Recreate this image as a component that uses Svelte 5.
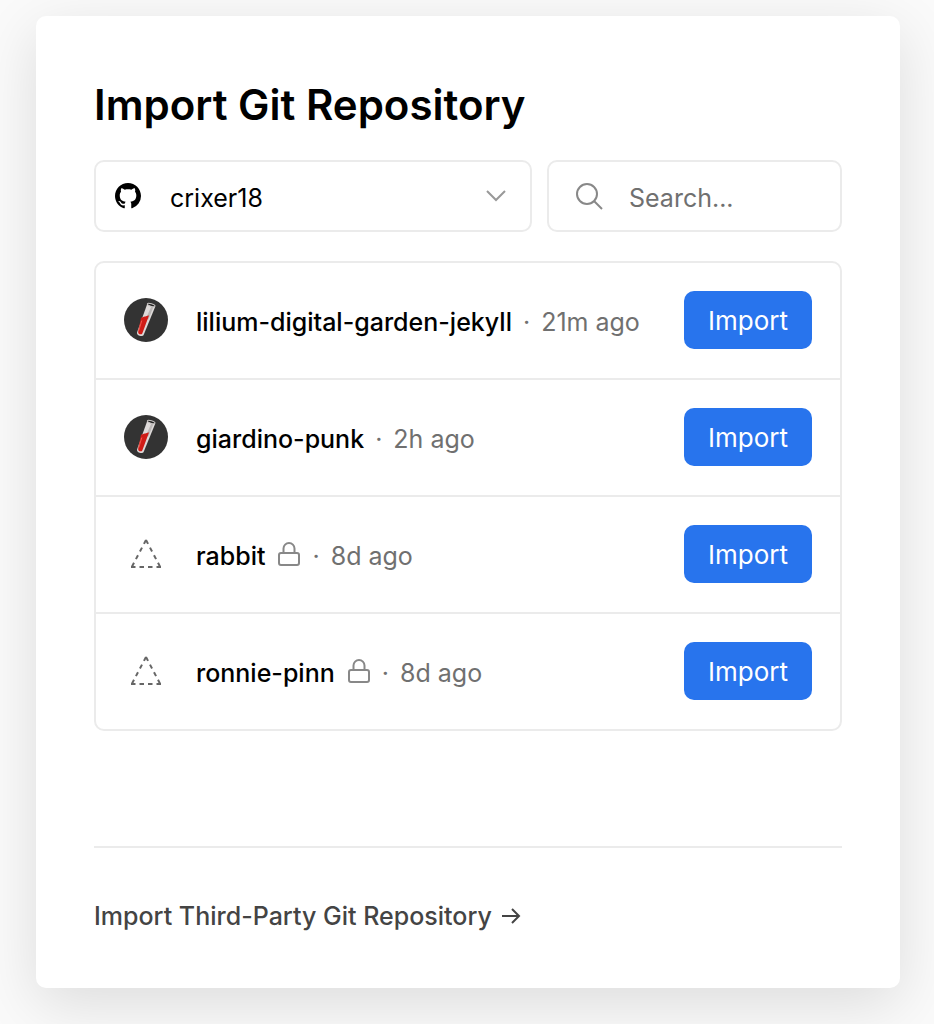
<script lang="ts">
  type Repo = {
    name: string
    updated: string
    framework: 'jekyll' | null
    locked: boolean
  }

  const accounts = ['crixer18']

  const repos: Repo[] = [
    { name: 'lilium-digital-garden-jekyll', updated: '21m ago', framework: 'jekyll', locked: false },
    { name: 'giardino-punk', updated: '2h ago', framework: 'jekyll', locked: false },
    { name: 'rabbit', updated: '8d ago', framework: null, locked: true },
    { name: 'ronnie-pinn', updated: '8d ago', framework: null, locked: true },
  ]

  let account = $state(accounts[0])
  let search = $state('')

  let filtered = $derived(repos.filter((repo) => repo.name.includes(search.trim().toLowerCase())))
</script>

<main class="card">
  <h1>Import Git Repository</h1>

  <div class="filters">
    <label class="field account">
      <svg class="github" viewBox="0 0 16 16" aria-hidden="true">
        <path
          d="M8 0C3.58 0 0 3.58 0 8c0 3.54 2.29 6.53 5.47 7.59.4.07.55-.17.55-.38 0-.19-.01-.82-.01-1.49-2.01.37-2.53-.49-2.69-.94-.09-.23-.48-.94-.82-1.13-.28-.15-.68-.52-.01-.53.63-.01 1.08.58 1.23.82.72 1.21 1.87.87 2.33.66.07-.52.28-.87.51-1.07-1.78-.2-3.64-.89-3.64-3.95 0-.87.31-1.59.82-2.15-.08-.2-.36-1.02.08-2.12 0 0 .67-.21 2.2.82.64-.18 1.32-.27 2-.27s1.36.09 2 .27c1.53-1.04 2.2-.82 2.2-.82.44 1.1.16 1.92.08 2.12.51.56.82 1.27.82 2.15 0 3.07-1.87 3.75-3.65 3.95.29.25.54.73.54 1.48 0 1.07-.01 1.93-.01 2.2 0 .21.15.46.55.38A8.01 8.01 0 0 0 16 8c0-4.42-3.58-8-8-8z"
        />
      </svg>
      <select bind:value={account} aria-label="Git account">
        {#each accounts as name}
          <option value={name}>{name}</option>
        {/each}
      </select>
      <svg class="chevron" viewBox="0 0 20 12" aria-hidden="true">
        <path d="M1 1l9 9 9-9" />
      </svg>
    </label>

    <label class="field search">
      <svg class="glass" viewBox="0 0 28 28" aria-hidden="true">
        <circle cx="12" cy="12" r="10" />
        <path d="M19 19l8 8" />
      </svg>
      <input type="text" placeholder="Search..." bind:value={search} aria-label="Search" />
    </label>
  </div>

  <ul class="repos">
    {#each filtered as repo (repo.name)}
      <li>
        <span class="framework">
          {#if repo.framework === 'jekyll'}
            <svg class="jekyll" viewBox="0 0 44 44" aria-hidden="true">
              <circle cx="22" cy="22" r="22" fill="#333" />
              <path d="M23.2 6l8 2.7-11.5 28c-1.2 2.9-7.6.9-6.6-2.4z" fill="#dedad9" />
              <path d="M27.4 8.2l2 .8-5 12.5-2.6-.8z" fill="#bbb7b6" />
              <path
                d="M17 19.5c1.6.4 2.4-1.3 4-1.1 1.6.1 2.2-1.2 4-.9l-6.6 17.7c-.9 2.2-4.8 1-4.2-1.5z"
                fill="#d01c17"
              />
              <path d="M17.8 22.5l-3 10" stroke="#ef5a50" />
              <ellipse cx="27.2" cy="7" rx="4" ry="1.3" transform="rotate(17 27.2 7)" fill="#222" stroke="#c9c5c4" />
            </svg>
          {:else}
            <svg class="unknown" viewBox="0 0 30 30" aria-hidden="true">
              <path d="M15 1L.8 28M15 1L29.2 28" stroke-dasharray="4.4 4.2" />
              <path d="M0 28h30" stroke-dasharray="4.5 4" />
            </svg>
          {/if}
        </span>

        <div class="info">
          <span class="name">{repo.name}</span>
          {#if repo.locked}
            <svg class="lock" viewBox="0 0 22 24" aria-label="Private">
              <rect x="1" y="11" width="20" height="12" rx="2" />
              <path d="M5.5 11V6.5a5.5 5.5 0 0 1 11 0V11" />
            </svg>
          {/if}
          <span class="dot">·</span>
          <span class="updated">{repo.updated}</span>
        </div>

        <button type="button">Import</button>
      </li>
    {/each}
  </ul>

  <footer>
    <a href="#third-party">
      Import Third-Party Git Repository
      <svg class="arrow" viewBox="0 0 20 18" aria-hidden="true">
        <path d="M1 9h17M11 2l7 7-7 7" />
      </svg>
    </a>
  </footer>
</main>

<style>
  :global(body) {
    background: #fafafa;
    font-family: Inter, 'Liberation Sans', sans-serif;
    font-size: 25px;
    color: #000;
  }

  .card {
    margin: 16px 34px 36px 36px;
    padding: 58px 58px 52px;
    background: #fff;
    border-radius: 10px;
    box-shadow: 0 16px 60px rgba(0, 0, 0, 0.12);
  }

  h1 {
    margin: 0 0 24px;
    font-size: 42px;
    line-height: 62px;
    font-weight: 600;
  }

  svg {
    flex: none;
    fill: none;
  }

  .filters {
    display: grid;
    grid-template-columns: 438fr 295fr;
    gap: 15px;
    margin-bottom: 29px;
  }

  .field {
    display: flex;
    align-items: center;
    min-width: 0;
    height: 72px;
    box-sizing: border-box;
    border: 2px solid #ebebeb;
    border-radius: 10px;
  }

  .account {
    padding: 0 24px 0 19px;
  }

  .search {
    padding: 0 20px 0 26px;
  }

  select,
  input {
    flex: 1;
    min-width: 0;
    height: 100%;
    padding: 4px 0 0;
    border: 0;
    outline: 0;
    background: none;
    appearance: none;
    font: inherit;
    color: inherit;
  }

  .account select {
    margin-left: 29px;
  }

  .search input {
    margin-left: 26px;
  }

  input::placeholder {
    color: #707070;
    opacity: 1;
  }

  .github {
    width: 26px;
    height: 26px;
    fill: #000;
  }

  .chevron {
    width: 20px;
    height: 12px;
    stroke: #999;
    stroke-width: 2;
  }

  .glass {
    width: 28px;
    height: 28px;
    stroke: #888;
    stroke-width: 2;
  }

  .repos {
    margin: 0;
    padding: 0;
    list-style: none;
    border: 2px solid #ebebeb;
    border-radius: 10px;
  }

  li {
    display: flex;
    align-items: center;
    gap: 28px;
    padding: 28px 28px 29px;
  }

  li + li {
    border-top: 2px solid #ebebeb;
  }

  .framework {
    display: flex;
    justify-content: center;
    width: 44px;
  }

  .jekyll {
    width: 44px;
    height: 44px;
  }

  .unknown {
    width: 30px;
    height: 30px;
    stroke: #666;
    stroke-width: 2;
  }

  .info {
    display: flex;
    flex: 1;
    align-items: center;
    min-width: 0;
    padding-top: 4px;
    line-height: 36px;
    white-space: nowrap;
  }

  .name {
    font-weight: 500;
  }

  .lock {
    width: 22px;
    height: 24px;
    margin: 0 1px 4px 13px;
    stroke: #888;
    stroke-width: 2;
  }

  .dot {
    margin: 0 11px;
    color: #707070;
  }

  .updated {
    color: #707070;
  }

  button {
    width: 128px;
    height: 58px;
    padding: 0;
    border: 0;
    border-radius: 10px;
    background: #2874ed;
    color: #fff;
    font: inherit;
    font-size: 26px;
    cursor: pointer;
  }

  footer {
    margin-top: 115px;
    padding-top: 48px;
    border-top: 2px solid #ebebeb;
  }

  a {
    display: flex;
    align-items: center;
    gap: 9px;
    line-height: 40px;
    font-weight: 500;
    color: #444;
    text-decoration: none;
  }

  .arrow {
    width: 20px;
    height: 18px;
    stroke: #444;
    stroke-width: 2;
  }
</style>
